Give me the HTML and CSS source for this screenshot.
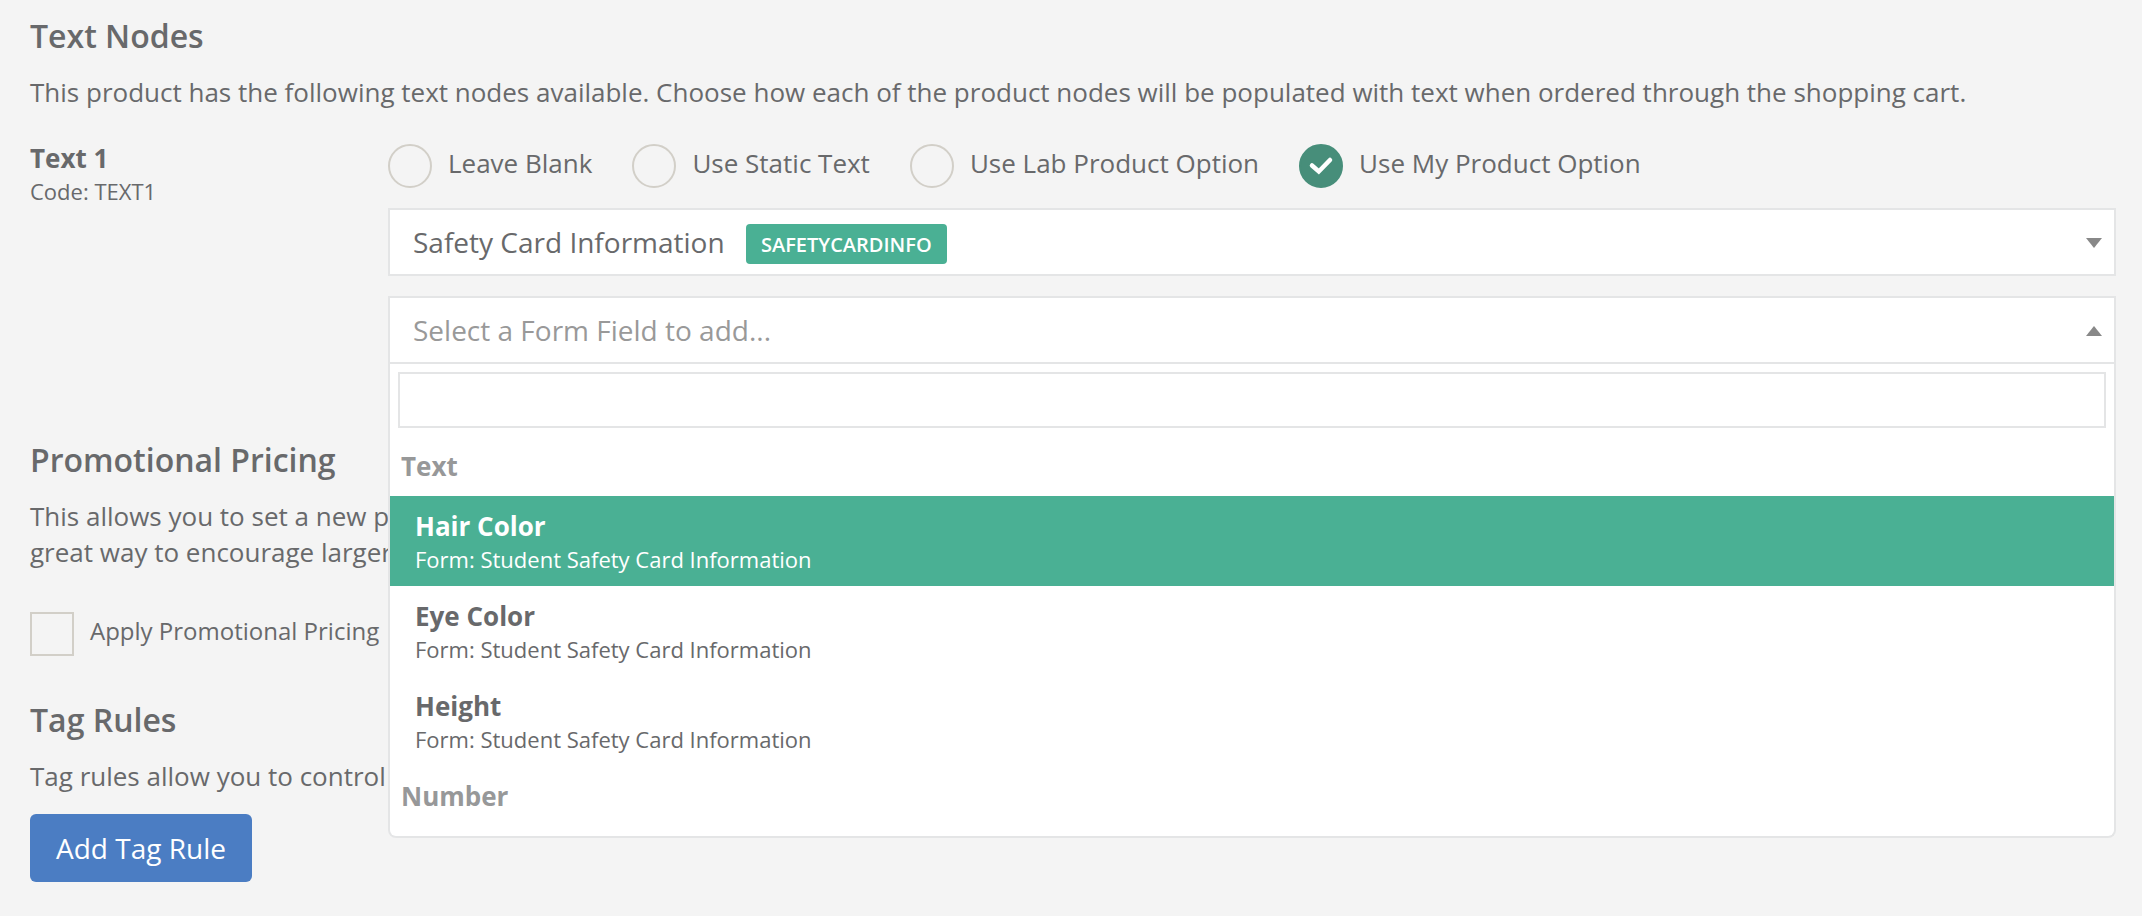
FILE: index.html
```html
<!DOCTYPE html>
<html lang="en">
<head>
<meta charset="utf-8">
<title>Product Settings</title>
<link rel="stylesheet" href="styles.css">
</head>
<body>
<main class="page">
  <section class="section">
    <h2 class="heading">Text Nodes</h2>
    <p class="copy">This product has the following text nodes available. Choose how each of the product nodes will be populated with text when ordered through the shopping cart.</p>
    <div class="node">
      <div class="node-info">
        <div class="node-name">Text 1</div>
        <div class="node-code">Code: TEXT1</div>
      </div>
      <div class="node-fields">
        <div class="radios" role="radiogroup" aria-label="Text 1">
          <label class="choice"><span class="mark"><input class="radio" type="radio" name="source"></span>Leave Blank</label>
          <label class="choice"><span class="mark"><input class="radio" type="radio" name="source"></span>Use Static Text</label>
          <label class="choice"><span class="mark"><input class="radio" type="radio" name="source"></span>Use Lab Product Option</label>
          <label class="choice"><span class="mark"><input class="radio" type="radio" name="source" checked><svg class="tick" viewBox="0 0 44 44" aria-hidden="true"><path d="M13 21.5 L19.8 27.5 L31 16"/></svg></span>Use My Product Option</label>
        </div>
        <div class="picker">
          <select class="select" aria-label="Product option"><option>Safety Card Information</option></select>
          <span class="badge">SAFETYCARDINFO</span>
          <svg class="arrow" viewBox="0 0 16 10" aria-hidden="true"><path d="M0 0H16L8 10Z"/></svg>
        </div>
        <div class="picker">
          <select class="select select-empty" aria-label="Form field"><option>Select a Form Field to add...</option></select>
          <svg class="arrow" viewBox="0 0 16 10" aria-hidden="true"><path d="M0 10H16L8 0Z"/></svg>
          <div class="panel">
            <input class="search" type="text" aria-label="Search form fields">
            <div class="results" role="listbox" aria-label="Form fields">
              <div class="group">Text</div>
              <div class="option option-active" role="option" aria-selected="true">
                <div class="option-name">Hair Color</div>
                <div class="option-form">Form: Student Safety Card Information</div>
              </div>
              <div class="option" role="option" aria-selected="false">
                <div class="option-name">Eye Color</div>
                <div class="option-form">Form: Student Safety Card Information</div>
              </div>
              <div class="option" role="option" aria-selected="false">
                <div class="option-name">Height</div>
                <div class="option-form">Form: Student Safety Card Information</div>
              </div>
              <div class="group">Number</div>
            </div>
          </div>
        </div>
      </div>
    </div>
  </section>

  <section class="section section-pricing">
    <h2 class="heading">Promotional Pricing</h2>
    <p class="copy">This allows you to set a new p<br>great way to encourage larger</p>
    <label class="promo"><input class="checkbox" type="checkbox">Apply Promotional Pricing</label>
  </section>

  <section class="section section-rules">
    <h2 class="heading">Tag Rules</h2>
    <p class="copy">Tag rules allow you to control</p>
    <button class="button" type="button">Add Tag Rule</button>
  </section>
</main>
</body>
</html>
```

FILE: styles.css
```css
* {
  box-sizing: border-box;
}

body {
  margin: 0;
  background: #f4f4f4;
  color: #68696b;
  font-family: "Open Sans", "Noto Sans", sans-serif;
  font-size: 26px;
  line-height: 36px;
}

.page {
  padding: 14px 26px 34px 30px;
}

.heading {
  margin: 0 0 16px;
  font-size: 32px;
  font-weight: 600;
  line-height: 44px;
}

.copy {
  margin: 0;
}

.section-pricing {
  margin-top: 74px;
}

.section-rules {
  margin-top: 42px;
}

.node {
  display: grid;
  grid-template-columns: 358px 1fr;
  margin-top: 30px;
}

.node-name {
  font-weight: 700;
}

.node-code {
  font-size: 22px;
  line-height: 30px;
}

.node-fields {
  display: flex;
  flex-direction: column;
  gap: 20px;
  padding-top: 4px;
}

.radios {
  display: flex;
  gap: 40px;
}

.choice {
  display: flex;
  gap: 16px;
  line-height: 38px;
}

.mark {
  position: relative;
  width: 44px;
  height: 44px;
}

.radio,
.checkbox {
  appearance: none;
  display: block;
  flex: none;
  width: 44px;
  height: 44px;
  margin: 0;
  border: 2px solid #d2cfc8;
}

.radio {
  border-radius: 50%;
}

.radio:checked {
  border-color: #478e7a;
  background: #478e7a;
}

.tick {
  position: absolute;
  inset: 0;
  fill: none;
  stroke: #fff;
  stroke-width: 4.5;
  stroke-linecap: round;
  pointer-events: none;
}

.picker {
  position: relative;
}

.select {
  appearance: none;
  display: block;
  width: 100%;
  height: 68px;
  padding: 0 40px 0 23px;
  border: 2px solid #e4e5e6;
  border-radius: 0;
  background: #fff;
  color: inherit;
  font: inherit;
  font-size: 28px;
}

.select-empty {
  color: #999;
}

.badge {
  position: absolute;
  top: 16px;
  left: 358px;
  padding: 1px 15px 0;
  border-radius: 4px;
  background: #4ab094;
  color: #fff;
  font-size: 20px;
  font-weight: 600;
  line-height: 39px;
  pointer-events: none;
}

.arrow {
  position: absolute;
  top: 30px;
  right: 14px;
  width: 16px;
  height: 10px;
  fill: #888;
  pointer-events: none;
}

.panel {
  position: absolute;
  z-index: 1;
  top: 100%;
  left: 0;
  right: 0;
  border: 2px solid #e4e5e6;
  border-top: 0;
  border-radius: 0 0 8px 8px;
  background: #fff;
}

.search {
  display: block;
  width: calc(100% - 16px);
  height: 56px;
  margin: 8px;
  padding: 0 8px;
  border: 2px solid #e4e5e6;
  background: #fff;
  color: inherit;
  font: inherit;
}

.results {
  max-height: 400px;
  padding-bottom: 10px;
}

.group {
  padding: 12px 11px;
  color: #979899;
  font-weight: 700;
}

.option {
  padding: 12px 25px;
}

.option-active {
  background: #4ab094;
  color: #fff;
}

.option-name {
  font-weight: 700;
}

.option-form {
  font-size: 22px;
  line-height: 30px;
}

.promo {
  display: flex;
  width: max-content;
  gap: 16px;
  margin-top: 42px;
  font-size: 24px;
  line-height: 38px;
}

.button {
  display: block;
  height: 68px;
  margin-top: 20px;
  padding: 0 26px;
  border: 0;
  border-radius: 6px;
  background: #4b7dc3;
  color: #fff;
  font: inherit;
  font-size: 28px;
}
```
